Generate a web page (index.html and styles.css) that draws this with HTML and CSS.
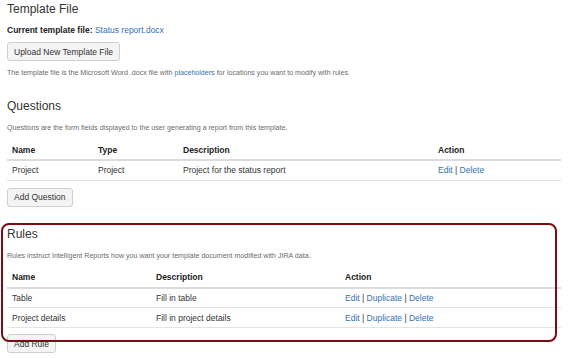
FILE: index.html
```html
<!DOCTYPE html>
<html>
<head>
<meta charset="utf-8">
<link rel="stylesheet" href="styles.css">
</head>
<body>
<div class="page">
  <h2 class="title">Template File</h2>
  <p class="current"><strong>Current template file:</strong> <a href="#">Status report.docx</a></p>
  <button class="btn btn-upload">Upload New Template File</button>
  <p class="help">The template file is the Microsoft Word .docx file with <a href="#">placeholders</a> for locations you want to modify with rules.</p>

  <h2 class="title section">Questions</h2>
  <p class="help help-section">Questions are the form fields displayed to the user generating a report from this template.</p>
  <table class="grid">
    <colgroup><col class="q1"><col class="q2"><col class="q3"><col></colgroup>
    <thead><tr><th>Name</th><th>Type</th><th>Description</th><th>Action</th></tr></thead>
    <tbody>
      <tr><td>Project</td><td>Project</td><td>Project for the status report</td><td><a href="#">Edit</a> | <a href="#">Delete</a></td></tr>
    </tbody>
  </table>
  <button class="btn btn-add">Add Question</button>

  <div class="rules">
    <h2 class="title">Rules</h2>
    <p class="help help-section">Rules instruct Intelligent Reports how you want your template document modified with JIRA data.</p>
    <table class="grid">
      <colgroup><col class="r1"><col class="r2"><col></colgroup>
      <thead><tr><th>Name</th><th>Description</th><th>Action</th></tr></thead>
      <tbody>
        <tr><td>Table</td><td>Fill in table</td><td><a href="#">Edit</a> | <a href="#">Duplicate</a> | <a href="#">Delete</a></td></tr>
        <tr><td>Project details</td><td>Fill in project details</td><td><a href="#">Edit</a> | <a href="#">Duplicate</a> | <a href="#">Delete</a></td></tr>
      </tbody>
    </table>
    <button class="btn btn-add btn-rule">Add Rule</button>
    <div class="highlight"></div>
  </div>
</div>
</body>
</html>
```

FILE: styles.css
```css
* { box-sizing: border-box; }
html, body { margin: 0; padding: 0; background: #fff; }
body {
  font-family: "Liberation Sans", Arial, sans-serif;
  color: #333;
  font-size: 8.5px;
}
a { color: #3572b0; text-decoration: none; }

.page {
  padding: 1px 9px 0 7px;
}

.title {
  margin: 0;
  font-size: 12px;
  line-height: 16px;
  font-weight: normal;
  color: #333;
}
.title.section { margin-top: 20px; }

.current {
  margin: 7px 0 0;
  line-height: 12px;
  font-size: 8.5px;
}
.current strong { font-weight: bold; color: #222; }

.btn {
  display: block;
  font-family: "Liberation Sans", Arial, sans-serif;
  font-size: 8.5px;
  color: #333;
  background: #f4f4f4;
  border: 1px solid #cfcfcf;
  border-radius: 3px;
  height: 19px;
  padding: 0 6px;
  margin: 6px 0 0;
}
.btn-add { margin-top: 7px; height: 19px; }
.btn-rule { margin-top: 6px; }

.help {
  margin: 7px 0 0;
  font-size: 7.1px;
  line-height: 10px;
  color: #6b6b6b;
}
.help-section { margin-top: 9px; }

.grid {
  width: 100%;
  border-collapse: collapse;
  margin-top: 7px;
  font-size: 8.5px;
}
.grid th {
  text-align: left;
  font-weight: bold;
  color: #222;
  height: 20px;
  padding: 0 5px;
  border-bottom: 2px solid #dcdcdc;
}
.grid td {
  height: 20px;
  padding: 0 5px;
  border-bottom: 1px solid #e4e4e4;
}
.q1 { width: 86px; }
.q2 { width: 85px; }
.q3 { width: 255px; }
.r1 { width: 144px; }
.r2 { width: 189px; }

.rules {
  position: relative;
  margin-top: 19px;
}
.highlight {
  position: absolute;
  left: -6px;
  top: -3px;
  width: 556px;
  height: 119px;
  border: 2px solid #7d0b12;
  border-radius: 8px;
  pointer-events: none;
}
```
